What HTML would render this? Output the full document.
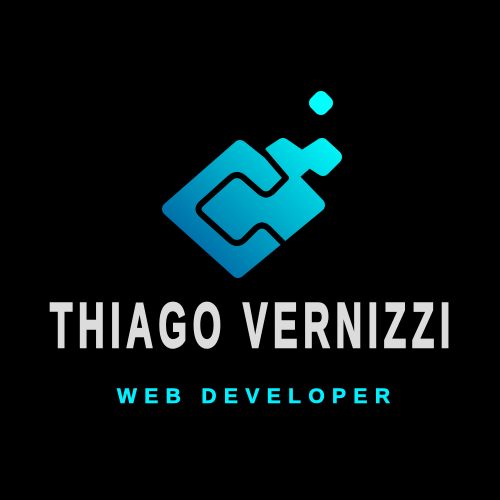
<!DOCTYPE html>
<html><head><style>
html,body{margin:0;padding:0;background:#000;width:500px;height:500px;overflow:hidden}
</style></head><body>
<svg width="500" height="500" style="position:absolute;left:0;top:0">
<defs><linearGradient id="g" gradientUnits="userSpaceOnUse" x1="190" y1="270" x2="335" y2="125">
<stop offset="0" stop-color="#0060a0"/><stop offset="0.5" stop-color="#00b0cc"/><stop offset="1" stop-color="#00ffff"/></linearGradient></defs>
<g fill="url(#g)" stroke="url(#g)" stroke-width="14" stroke-linejoin="round">
<polygon points="240,147 169,209 238,271 318,205 292,178 260,163"/>
<polygon points="271,153 283,145 302,158 322,145 335,157 323,169 309,160 293,174 283,170"/>
<polygon points="321,98 326,103 321,108 316,103"/>
</g>
<path d="M262,150 L286,178 L272,192 Q266,197 260,192 L244,178 Q237,172 230,178 L201,204 Q196,209 201,214 L230,240 Q237,246 244,240 L256,228 Q262,223 268,228 L292,252" fill="none" stroke="#000" stroke-width="6" stroke-linejoin="round"/>
<g transform="translate(50,0) scale(0.58,1)">
<text x="0" y="347" textLength="690" lengthAdjust="spacing" font-family="Liberation Sans" font-weight="bold" font-size="63" fill="#dcdcdc" stroke="#dcdcdc" stroke-width="2.5">THIAGO VERNIZZI</text>
</g>
<text x="117" y="403" textLength="273" lengthAdjust="spacing" font-family="Liberation Sans" font-weight="bold" font-size="21" fill="#00f0ff" stroke="#00f0ff" stroke-width="0.6">WEB DEVELOPER</text>
</svg>
</body></html>
